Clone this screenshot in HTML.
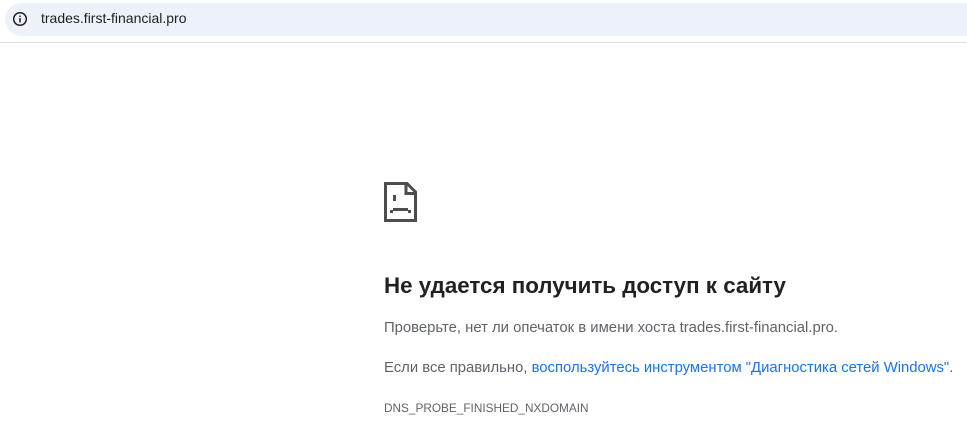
<!DOCTYPE html>
<html><head><meta charset="utf-8"><style>
body{margin:0;width:967px;height:447px;background:#fff;font-family:"Liberation Sans",sans-serif;position:relative;overflow:hidden}
.bar{position:absolute;left:5px;top:3px;width:980px;height:33px;background:#edf2fa;border-radius:17px}
.line{position:absolute;left:0;top:42px;width:967px;height:1px;background:#dfe1e5}
.url{position:absolute;left:41px;top:10px;font-size:14px;color:#1f1f1f;white-space:nowrap}
.t{position:absolute;left:384px;white-space:nowrap}
h1{margin:0;font-size:22.35px;font-weight:bold;color:#202124}
.p{font-size:14.85px;color:#5f6368}
a{color:#1a73e8;text-decoration:none}
</style></head><body>
<div class="bar"></div><div class="line"></div>
<svg style="position:absolute;left:12px;top:11px" width="16" height="16" viewBox="0 0 16 16"><circle cx="8" cy="8" r="6.3" fill="none" stroke="#1f1f1f" stroke-width="1.5"/><rect x="7.25" y="7" width="1.5" height="4.5" fill="#1f1f1f"/><rect x="7.25" y="4.5" width="1.5" height="1.5" fill="#1f1f1f"/></svg>
<div class="url">trades.first-financial.pro</div>
<svg style="position:absolute;left:384px;top:182px" width="33" height="40" viewBox="0 0 33 40"><path d="M1.5 1.5H23L31.5 10V38.5H1.5Z" fill="none" stroke="#4d4d4d" stroke-width="3"/><path d="M22 1.5V11.5H31.5" fill="none" stroke="#4d4d4d" stroke-width="3"/><rect x="9" y="13" width="3" height="6" fill="#4d4d4d"/><rect x="9" y="26" width="15" height="3" fill="#4d4d4d"/><rect x="6" y="28" width="3" height="3" fill="#4d4d4d"/><rect x="24" y="28" width="3" height="3" fill="#4d4d4d"/></svg>
<div class="t" style="top:273px"><h1>Не удается получить доступ к сайту</h1></div>
<div class="t p" style="top:320px">Проверьте, нет ли опечаток в имени хоста trades.first-financial.pro.</div>
<div class="t p" style="top:360px">Если все правильно, <a>воспользуйтесь инструментом "Диагностика сетей Windows"</a>.</div>
<div class="t" style="top:401px;font-size:11.8px;color:#5f6368">DNS_PROBE_FINISHED_NXDOMAIN</div>
</body></html>
